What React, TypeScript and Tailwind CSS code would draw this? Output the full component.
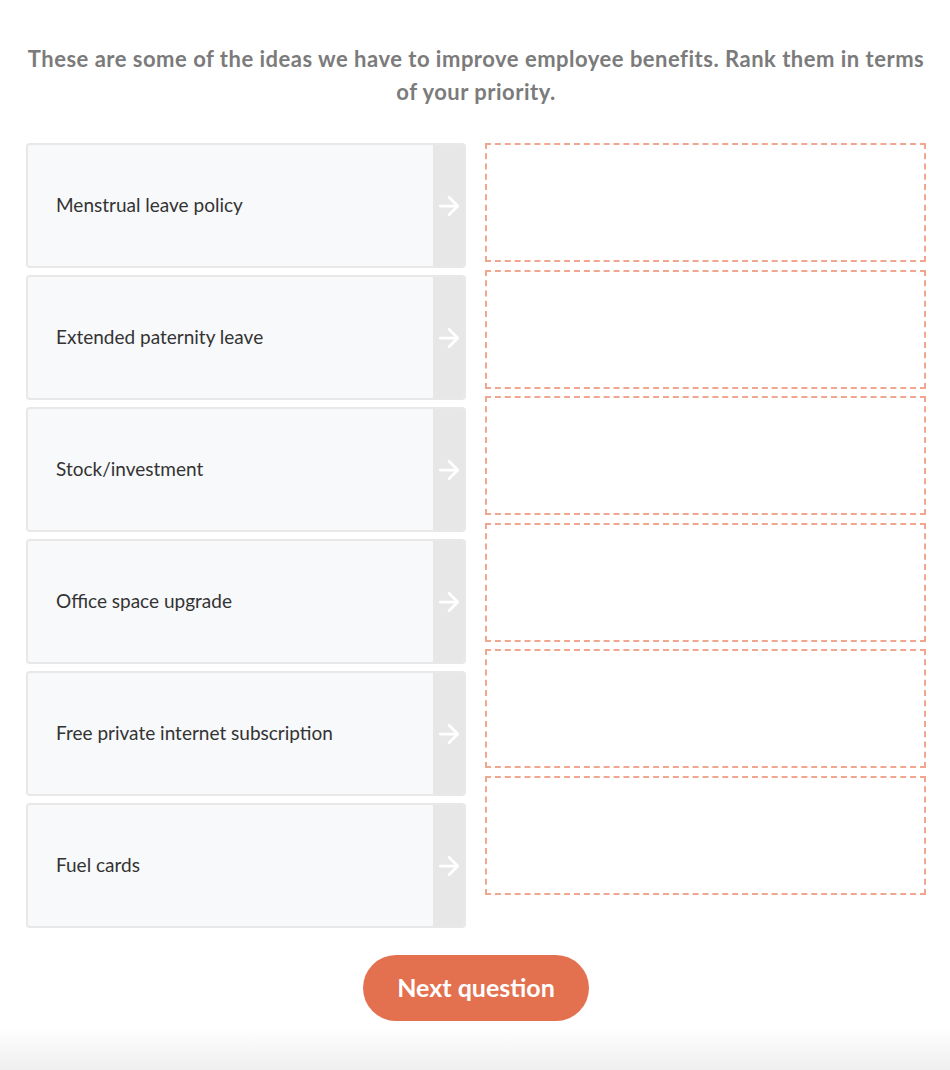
import { ArrowRight } from 'lucide-react'

const options = [
  'Menstrual leave policy',
  'Extended paternity leave',
  'Stock/investment',
  'Office space upgrade',
  'Free private internet subscription',
  'Fuel cards',
]

export default function App() {
  return (
    <div className="relative min-h-[1070px] bg-white font-['Lato',sans-serif]">
      <div className="pl-[26px] pr-[24px] pt-[42px]">
        <h2 className="text-center text-[22px] font-bold leading-[33px] tracking-[0.5px] text-[#7b7b7b]">
          These are some of the ideas we have to improve employee benefits. Rank them in terms of your priority.
        </h2>

        <div className="mt-[35px] flex gap-[19px]">
          <div className="flex w-[440px] flex-col gap-[7px]">
            {options.map((opt) => (
              <div
                key={opt}
                className="flex h-[125px] overflow-hidden rounded-[4px] border-2 border-[#e8e8e8] bg-[#f8f9fb]"
              >
                <div className="flex flex-1 items-center pl-[28px] text-[19px] text-[#333]">{opt}</div>
                <div className="flex w-[31px] items-center justify-center bg-[#e7e7e7]">
                  <ArrowRight size={30} strokeWidth={2.2} className="shrink-0 text-white" />
                </div>
              </div>
            ))}
          </div>

          <div className="flex w-[441px] flex-col gap-[7.6px]">
            {options.map((opt) => (
              <div key={opt} className="h-[119px] border-2 border-dashed border-[#f0a68f]" />
            ))}
          </div>
        </div>

        <div className="relative z-10 mt-[27px] flex justify-center">
          <button className="h-[66px] w-[226px] rounded-full bg-[#e3714f] text-[25px] font-bold text-white">
            Next question
          </button>
        </div>
      </div>

      <div className="absolute bottom-0 left-0 right-0 h-[42px] bg-gradient-to-b from-white to-[#efefef]" />
    </div>
  )
}
